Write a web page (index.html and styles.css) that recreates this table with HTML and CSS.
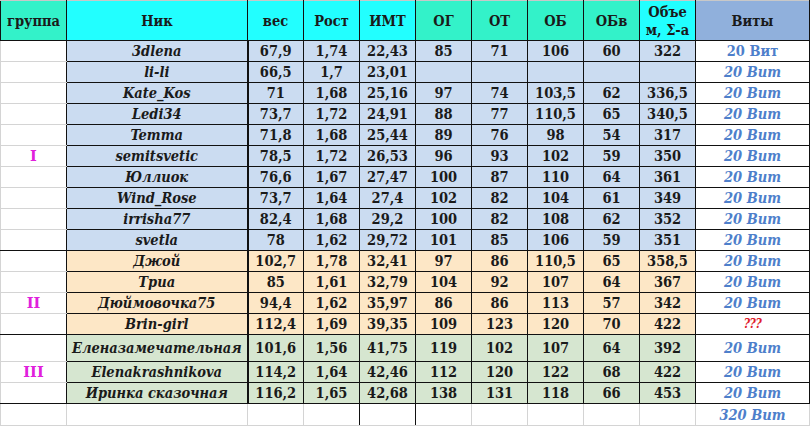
FILE: index.html
```html
<!DOCTYPE html>
<html lang="ru">
<head>
<meta charset="utf-8">
<title>Таблица</title>
<link rel="stylesheet" href="styles.css">
</head>
<body>
<table class="sheet">
<colgroup>
<col class="c-grp"><col class="c-nick"><col class="c-num"><col class="c-num"><col class="c-num"><col class="c-num"><col class="c-num"><col class="c-num"><col class="c-num"><col class="c-num"><col class="c-vit">
</colgroup>
<thead>
<tr class="head">
<th class="h-aqua grp-h">группа</th>
<th class="h-cyan nick-h">Ник</th>
<th class="h-cyan">вес</th>
<th class="h-cyan">Рост</th>
<th class="h-cyan">ИМТ</th>
<th class="h-aqua">ОГ</th>
<th class="h-aqua">ОТ</th>
<th class="h-aqua">ОБ</th>
<th class="h-aqua">ОБв</th>
<th class="h-cyan wrap">Объе м, Σ-а</th>
<th class="h-steel">Виты</th>
</tr>
</thead>
<tbody>
<tr class="g1"><td class="grp"></td><td class="nick">3dlena</td><td>67,9</td><td>1,74</td><td>22,43</td><td>85</td><td>71</td><td>106</td><td>60</td><td>322</td><td class="vit upright">20 Вит</td></tr>
<tr class="g1"><td class="grp"></td><td class="nick">li-li</td><td>66,5</td><td>1,7</td><td>23,01</td><td></td><td></td><td></td><td></td><td></td><td class="vit">20 Вит</td></tr>
<tr class="g1"><td class="grp"></td><td class="nick">Kate_Kos</td><td>71</td><td>1,68</td><td>25,16</td><td>97</td><td>74</td><td>103,5</td><td>62</td><td>336,5</td><td class="vit">20 Вит</td></tr>
<tr class="g1"><td class="grp"></td><td class="nick">Ledi34</td><td>73,7</td><td>1,72</td><td>24,91</td><td>88</td><td>77</td><td>110,5</td><td>65</td><td>340,5</td><td class="vit">20 Вит</td></tr>
<tr class="g1"><td class="grp"></td><td class="nick">Temma</td><td>71,8</td><td>1,68</td><td>25,44</td><td>89</td><td>76</td><td>98</td><td>54</td><td>317</td><td class="vit">20 Вит</td></tr>
<tr class="g1"><td class="grp roman">I</td><td class="nick">semitsvetic</td><td>78,5</td><td>1,72</td><td>26,53</td><td>96</td><td>93</td><td>102</td><td>59</td><td>350</td><td class="vit">20 Вит</td></tr>
<tr class="g1"><td class="grp"></td><td class="nick">Юллиок</td><td>76,6</td><td>1,67</td><td>27,47</td><td>100</td><td>87</td><td>110</td><td>64</td><td>361</td><td class="vit">20 Вит</td></tr>
<tr class="g1"><td class="grp"></td><td class="nick">Wind_Rose</td><td>73,7</td><td>1,64</td><td>27,4</td><td>102</td><td>82</td><td>104</td><td>61</td><td>349</td><td class="vit">20 Вит</td></tr>
<tr class="g1"><td class="grp"></td><td class="nick">irrisha77</td><td>82,4</td><td>1,68</td><td>29,2</td><td>100</td><td>82</td><td>108</td><td>62</td><td>352</td><td class="vit">20 Вит</td></tr>
<tr class="g1 end"><td class="grp"></td><td class="nick">svetla</td><td>78</td><td>1,62</td><td>29,72</td><td>101</td><td>85</td><td>106</td><td>59</td><td>351</td><td class="vit">20 Вит</td></tr>
<tr class="g2"><td class="grp"></td><td class="nick">Джой</td><td>102,7</td><td>1,78</td><td>32,41</td><td>97</td><td>86</td><td>110,5</td><td>65</td><td>358,5</td><td class="vit">20 Вит</td></tr>
<tr class="g2"><td class="grp"></td><td class="nick">Триа</td><td>85</td><td>1,61</td><td>32,79</td><td>104</td><td>92</td><td>107</td><td>64</td><td>367</td><td class="vit">20 Вит</td></tr>
<tr class="g2"><td class="grp roman">II</td><td class="nick">Дюймовочка75</td><td>94,4</td><td>1,62</td><td>35,97</td><td>86</td><td>86</td><td>113</td><td>57</td><td>342</td><td class="vit">20 Вит</td></tr>
<tr class="g2 end"><td class="grp"></td><td class="nick">Brin-girl</td><td>112,4</td><td>1,69</td><td>39,35</td><td>109</td><td>123</td><td>120</td><td>70</td><td>422</td><td class="vit q">???</td></tr>
<tr class="g3 tall"><td class="grp"></td><td class="nick">Еленазамечательная</td><td>101,6</td><td>1,56</td><td>41,75</td><td>119</td><td>102</td><td>107</td><td>64</td><td>392</td><td class="vit">20 Вит</td></tr>
<tr class="g3"><td class="grp roman">III</td><td class="nick">Elenakrashnikova</td><td>114,2</td><td>1,64</td><td>42,46</td><td>112</td><td>120</td><td>122</td><td>68</td><td>422</td><td class="vit">20 Вит</td></tr>
<tr class="g3 end"><td class="grp"></td><td class="nick">Иринка сказочная</td><td>116,2</td><td>1,65</td><td>42,68</td><td>138</td><td>131</td><td>118</td><td>66</td><td>453</td><td class="vit">20 Вит</td></tr>
<tr class="total"><td class="grp"></td><td></td><td></td><td class="dark-r"></td><td class="dark-r"></td><td></td><td></td><td></td><td></td><td></td><td class="vit">320 Вит</td></tr>
</tbody>
</table>
</body>
</html>
```
FILE: styles.css
```css
html, body {
  margin: 0;
  padding: 0;
  background: #ffffff;
}

.sheet {
  border-collapse: collapse;
  table-layout: fixed;
  width: 810px;
  font-family: "DejaVu Serif Condensed", "DejaVu Serif", serif;
  font-stretch: condensed;
  font-weight: bold;
  font-size: 14.5px;
  color: #1a1a1a;
}

.c-grp { width: 66px; }
.c-nick { width: 181px; }
.c-num { width: 56px; }
.c-vit { width: 114px; }

.sheet th,
.sheet td {
  padding: 0;
  text-align: center;
  vertical-align: middle;
  border: 1px solid #111111;
  white-space: nowrap;
  overflow: hidden;
  line-height: 16px;
}

.sheet td {
  height: 20px;
}

.head th {
  height: 39px;
  font-weight: bold;
  border-top: 1px solid #c8c8c8;
}

.h-aqua { background: #33f2c9; }
.h-cyan { background: #22ffff; }
.h-steel { background: #90b0dc; }

.sheet th.wrap {
  white-space: normal;
  line-height: 18px;
  padding: 0 2px;
}

.nick-h { border-right-width: 2px; }

.g1 td { background: #cbdcf1; }
.g2 td { background: #fde7c6; }
.g3 td { background: #d6e6d0; }

.sheet td.nick {
  font-style: italic;
  border-right-width: 2px;
}

.sheet td.grp {
  background: #ffffff;
  border-top: 1px solid #d4d4d4;
  border-bottom: 1px solid #d4d4d4;
  border-left: 1px solid #d4d4d4;
  border-right: 1px solid #111111;
}

.sheet tr.end td,
.sheet tr.end td.grp {
  border-bottom: 1px solid #111111;
}

.roman {
  color: #e020dc;
  font-family: "DejaVu Serif", serif;
  font-stretch: normal;
}

.sheet td.vit {
  background: #ffffff;
  color: #4e7fcb;
  font-style: italic;
}

.sheet td.upright {
  font-style: normal;
}

.sheet td.q {
  color: #e0202a;
  font-size: 12px;
  letter-spacing: -0.5px;
}

.tall td {
  height: 26px;
}

.sheet .total td {
  height: 21px;
  background: #ffffff;
  border: 1px solid #d4d4d4;
}

.sheet .total td.grp {
  border-right: 1px solid #d4d4d4;
}

.sheet .total td.dark-r {
  border-right: 1px solid #111111;
}

.sheet .total td.vit {
  border-right: 1px solid #d4d4d4;
}
```
